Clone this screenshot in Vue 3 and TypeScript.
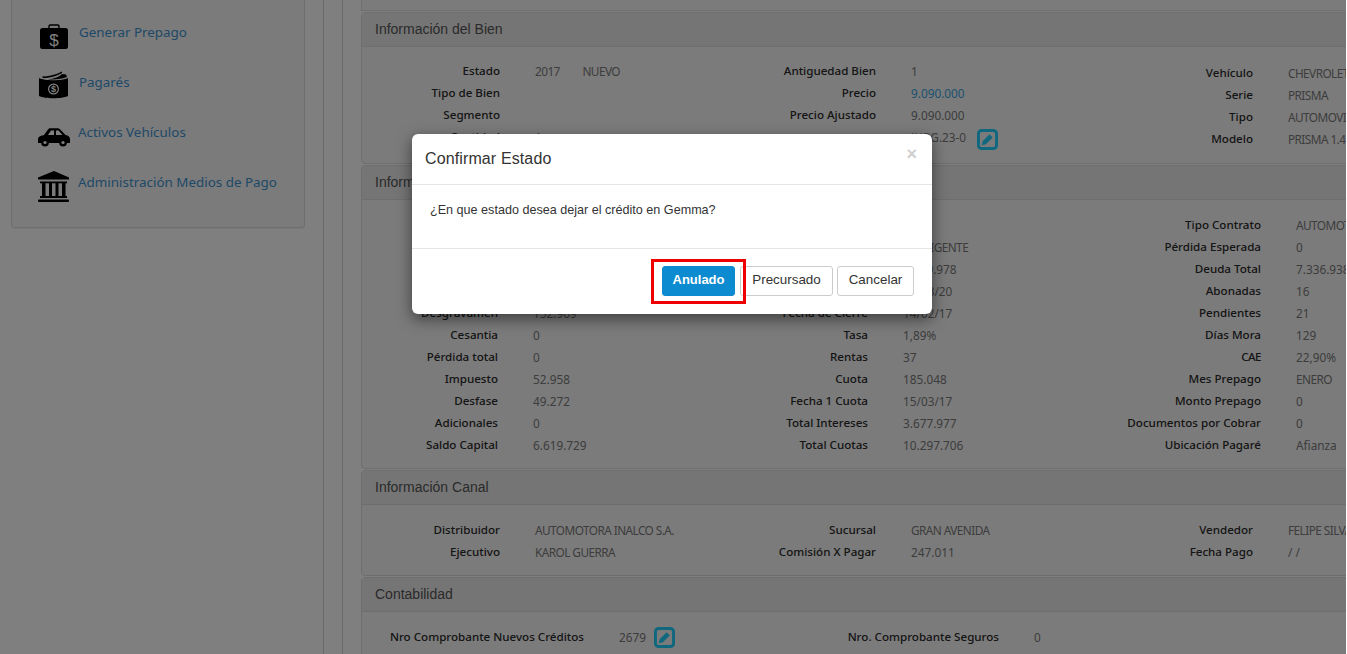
<script setup lang="ts">
interface Section {
  title: string
  kind: string
  rows: string[][]
}

const nav = ['Generar Prepago', 'Pagarés', 'Activos Vehículos', 'Administración Medios de Pago']

const sections: Section[] = [
  {
    title: 'Información del Bien',
    kind: 'bien',
    rows: [
      ['Estado', '2017 \u00a0\u00a0\u00a0\u00a0\u00a0\u00a0\u00a0\u00a0NUEVO', 'Antiguedad Bien', '1', 'Vehículo', 'CHEVROLET'],
      ['Tipo de Bien', '', 'Precio', '@9.090.000', 'Serie', 'PRISMA'],
      ['Segmento', '', 'Precio Ajustado', '9.090.000', 'Tipo', 'AUTOMOVIL'],
      ['Cantidad', '1', '', '#JHRG.23-0', 'Modelo', 'PRISMA 1.4'],
    ],
  },
  {
    title: 'Información Crédito',
    kind: 'credito',
    rows: [
      ['Crédito', '', 'Producto', '', 'Tipo Contrato', 'AUTOMOTRIZ'],
      ['Rut', '', 'Estado', '01 - VIGENTE', 'Pérdida Esperada', '0'],
      ['Pie', '', 'Financiado', '6.619.978', 'Deuda Total', '7.336.938'],
      ['Gastos', '', 'Vencimiento', '15/03/20', 'Abonadas', '16'],
      ['Desgravamen', '152.969', 'Fecha de Cierre', '14/02/17', 'Pendientes', '21'],
      ['Cesantia', '0', 'Tasa', '1,89%', 'Días Mora', '129'],
      ['Pérdida total', '0', 'Rentas', '37', 'CAE', '22,90%'],
      ['Impuesto', '52.958', 'Cuota', '185.048', 'Mes Prepago', 'ENERO'],
      ['Desfase', '49.272', 'Fecha 1 Cuota', '15/03/17', 'Monto Prepago', '0'],
      ['Adicionales', '0', 'Total Intereses', '3.677.977', 'Documentos por Cobrar', '0'],
      ['Saldo Capital', '6.619.729', 'Total Cuotas', '10.297.706', 'Ubicación Pagaré', 'Afianza'],
    ],
  },
  {
    title: 'Información Canal',
    kind: 'canal',
    rows: [
      ['Distribuidor', 'AUTOMOTORA INALCO S.A.', 'Sucursal', 'GRAN AVENIDA', 'Vendedor', 'FELIPE SILVA'],
      ['Ejecutivo', 'KAROL GUERRA', 'Comisión X Pagar', '247.011', 'Fecha Pago', '/ /'],
    ],
  },
  {
    title: 'Contabilidad',
    kind: 'conta',
    rows: [['Nro Comprobante Nuevos Créditos', '#2679', 'Nro. Comprobante Seguros', '0']],
  },
]

const clean = (v: string): string => v.replace(/^[@#]/, '')
const isUpper = (v: string): boolean => /[A-Z]{3}/.test(v) && !v.startsWith('#')
</script>

<template>
  <div class="page">
    <aside class="sidebar">
      <nav class="nav">
        <a v-for="(item, i) in nav" :key="item" class="nav-item">
          <svg class="nav-icon" viewBox="0 0 32 32">
            <g v-if="i === 0">
              <path d="M11 8V5.2C11 4.5 11.5 4 12.2 4h7.6c.7 0 1.2.5 1.2 1.2V8" fill="none" stroke="#000" stroke-width="1.4" />
              <rect x="2" y="7" width="28" height="21" rx="2.5" fill="#000" />
              <text x="16" y="24.500" class="glyph">$</text>
            </g>
            <g v-else-if="i === 1">
              <path d="M4 5.500C10 5.500 18 4 24 .5V2C19 5 11 7 5 7z" fill="#000" />
              <path d="M24 3l4 .5L29 6C24 8 18 8.500 10 8.500 17 7.500 21 6 24 3z" fill="#000" />
              <path d="M1 7c5 3 24 3 29 0v18c-6 3-23 3-29 0z" fill="#000" />
              <circle cx="15.500" cy="18" r="5.500" fill="#fff" />
              <circle cx="15.500" cy="18" r="4.300" fill="#000" />
              <text x="15.500" y="21" class="glyph small">$</text>
            </g>
            <g v-else-if="i === 2">
              <path d="M0 19c0-3 1.500-4 6-5l4-5.500c.6-.8 1.300-1.200 2.400-1.200h7.200c1 0 1.800.4 2.600 1.200l5.300 5.500c3 .6 4.500 2 4.500 4.500v3.500H0z" fill="#000" />
              <path d="M10 14l3-4.500h3V14zM18 9.500h2.500l4 4.500H18z" fill="#fff" />
              <circle cx="7" cy="21.500" r="3.900" fill="#000" />
              <circle cx="7" cy="21.500" r="1.600" fill="#fff" />
              <circle cx="25" cy="21.500" r="3.900" fill="#000" />
              <circle cx="25" cy="21.500" r="1.600" fill="#fff" />
            </g>
            <g v-else>
              <path d="M16 0 31 6.500v2H0v-2z" fill="#000" />
              <rect x="2" y="10.500" width="27" height="1.800" fill="#000" />
              <rect x="4" y="12" width="3.500" height="13" fill="#000" />
              <rect x="11" y="12" width="3" height="13" fill="#000" />
              <rect x="17.500" y="12" width="3" height="13" fill="#000" />
              <rect x="24" y="12" width="3.500" height="13" fill="#000" />
              <rect x="2" y="25" width="27" height="2" fill="#000" />
              <rect x="0" y="28.500" width="31" height="2.500" rx="1" fill="#000" />
            </g>
          </svg>
          <span class="nav-text" :class="{ tight: i > 1 }">{{ item }}</span>
        </a>
      </nav>
    </aside>

    <div class="gutter"></div>

    <main class="main">
      <div class="stub"></div>
      <section v-for="s in sections" :key="s.title" class="panel" :class="s.kind">
        <h3 class="panel-title">{{ s.title }}</h3>
        <div class="grid">
          <template v-for="(row, r) in s.rows" :key="r">
            <div
              v-for="(cell, c) in row"
              :key="c"
              class="cell"
              :class="[c % 2 === 0 ? 'label' : 'value', `col${c}`, { link: cell.startsWith('@'), upper: isUpper(cell) }]"
            >
              {{ clean(cell) }}
              <svg v-if="cell.startsWith('#')" class="edit" viewBox="0 0 20 20">
                <rect x="1.400" y="1.400" width="17.200" height="17.200" rx="3" fill="none" stroke="#20d0ff" stroke-width="2.800" />
                <path d="M4.500 15.500l1-4 6.500-6.500 3 3-6.500 6.500z" fill="#20d0ff" />
              </svg>
            </div>
          </template>
        </div>
      </section>
    </main>

    <div class="overlay">
      <div class="modal">
        <header class="modal-header">
          <h4 class="modal-title">Confirmar Estado</h4>
          <span class="close">×</span>
        </header>
        <div class="modal-body">¿En que estado desea dejar el crédito en Gemma?</div>
        <footer class="modal-footer">
          <button class="btn primary">Anulado</button>
          <button class="btn second">Precursado</button>
          <button class="btn third">Cancelar</button>
          <span class="mark"></span>
        </footer>
      </div>
    </div>
  </div>
</template>

<style scoped>
.page {
  display: flex;
  width: 1346px;
  height: 654px;
  overflow: hidden;
  position: relative;
  background: #fff;
  font-family: "Noto Sans", "DejaVu Sans", sans-serif;
  font-size: 11.8px;
}
.sidebar {
  flex: none;
  width: 323px;
  box-sizing: content-box;
  border-right: 1px solid #d2d2d2;
}
.nav {
  box-sizing: border-box;
  width: 294px;
  height: 228px;
  margin-left: 11px;
  padding: 21px 0 0 26px;
  background: #f6f6f6;
  border: 1px solid #ddd;
  border-top: 0;
  border-radius: 0 0 4px 4px;
  box-shadow: 0 1px 1px rgba(0, 0, 0, 0.05);
}
.nav-item {
  display: flex;
  height: 50px;
}
.nav-icon {
  flex: none;
  width: 32px;
  height: 32px;
  margin-right: 9px;
}
.nav-text {
  line-height: 22px;
  font-size: 13.4px;
  color: #3f92d0;
}
.nav-text.tight {
  margin-left: -1px;
}
.glyph {
  fill: #fff;
  font-family: "Liberation Sans", sans-serif;
  font-size: 17px;
  text-anchor: middle;
}
.glyph.small {
  font-size: 9px;
  font-weight: 700;
}
.gutter {
  flex: none;
  width: 18px;
  border-right: 1px solid #d2d2d2;
}
.main {
  flex: none;
  width: 1100px;
  margin-left: 18px;
  display: flex;
  flex-direction: column;
  gap: 1px;
}
.stub {
  flex: none;
  height: 11px;
  background: #f6f6f6;
  border: 1px solid #ddd;
  border-top: 0;
  box-sizing: border-box;
}
.panel {
  flex: none;
  background: #f6f6f6;
  border: 1px solid #ddd;
  border-radius: 4px;
  box-sizing: border-box;
}
.panel-title {
  margin: 0;
  height: 33px;
  padding-left: 13px;
  line-height: 32px;
  background: #ebebeb;
  border-bottom: 1px solid #ddd;
  font-family: "Liberation Sans", sans-serif;
  font-size: 14px;
  font-weight: 400;
  color: #555;
}
.grid {
  display: grid;
  grid-auto-rows: 22px;
  column-gap: 35px;
}
.bien .grid {
  grid-template-columns: 138px 150px 156px 150px 157px 1fr;
  padding: 13px 0 15px;
}
.credito .grid {
  grid-template-columns: 136px 150px 150px 150px 173px 1fr;
  padding: 14px 0 12px;
}
.canal .grid {
  grid-template-columns: 138px 150px 156px 150px 157px 1fr;
  padding: 14px 0 12px;
}
.conta .grid {
  grid-template-columns: 222px 100px 245px 150px;
  padding: 14px 0 13px;
}
.cell {
  line-height: 22px;
  white-space: nowrap;
  display: flex;
  align-items: center;
}
.label {
  justify-content: flex-end;
  color: #2a2a2a;
  font-size: 11.6px;
  font-weight: 500;
}
.value {
  color: #7a7a7a;
}
.upper {
  letter-spacing: -0.55px;
}
.link {
  color: #3aa4e0;
}
.bien .col4,
.bien .col5 {
  margin-top: 2px;
  margin-bottom: -2px;
}
.edit {
  width: 21px;
  height: 21px;
  margin-left: 11px;
  flex: none;
}
.bien .edit {
  margin-top: 4px;
}
.conta .edit {
  margin-left: 8px;
}
.overlay {
  position: absolute;
  inset: 0;
  width: 1347px;
  padding: 134px 0 0 412px;
  box-sizing: border-box;
  background: rgba(0, 0, 0, 0.5);
}
.modal {
  width: 520px;
  height: 180px;
  background: #fff;
  border-radius: 6px;
  box-shadow: 0 5px 15px rgba(0, 0, 0, 0.5);
  font-family: "Liberation Sans", sans-serif;
  color: #333;
}
.modal-header {
  display: flex;
  justify-content: space-between;
  box-sizing: border-box;
  height: 51px;
  padding: 15px 15px 0 13px;
  border-bottom: 1px solid #e5e5e5;
}
.modal-title {
  margin: 0;
  font-size: 16px;
  line-height: 20px;
  font-weight: 400;
  letter-spacing: 0.12px;
}
.close {
  font-size: 18px;
  line-height: 10px;
  font-weight: 700;
  color: #cfcfcf;
}
.modal-body {
  box-sizing: border-box;
  height: 64px;
  padding: 16px 18px 0;
  font-size: 12.6px;
  line-height: 18px;
  border-bottom: 1px solid #e5e5e5;
}
.modal-footer {
  position: relative;
  display: flex;
  justify-content: flex-end;
  gap: 4px;
  padding: 17px 18px 0 0;
}
.btn {
  width: 77px;
  height: 30px;
  padding: 0 0 3px;
  border: 1px solid #ccc;
  border-radius: 3px;
  background: #fff;
  color: #333;
  font-family: inherit;
  font-size: 13.4px;
}
.second {
  width: 93px;
}
.primary {
  width: 73px;
  margin-right: 1px;
  background: #0d8bd0;
  border-color: #0d8bd0;
  color: #fff;
  font-size: 13px;
  font-weight: 700;
}
.mark {
  position: absolute;
  left: 239px;
  top: 10px;
  width: 95px;
  height: 45px;
  box-sizing: border-box;
  border: 3px solid #ee0000;
  pointer-events: none;
}
</style>

<style>
html,
body {
  margin: 0;
  background: #fff;
}
</style>
